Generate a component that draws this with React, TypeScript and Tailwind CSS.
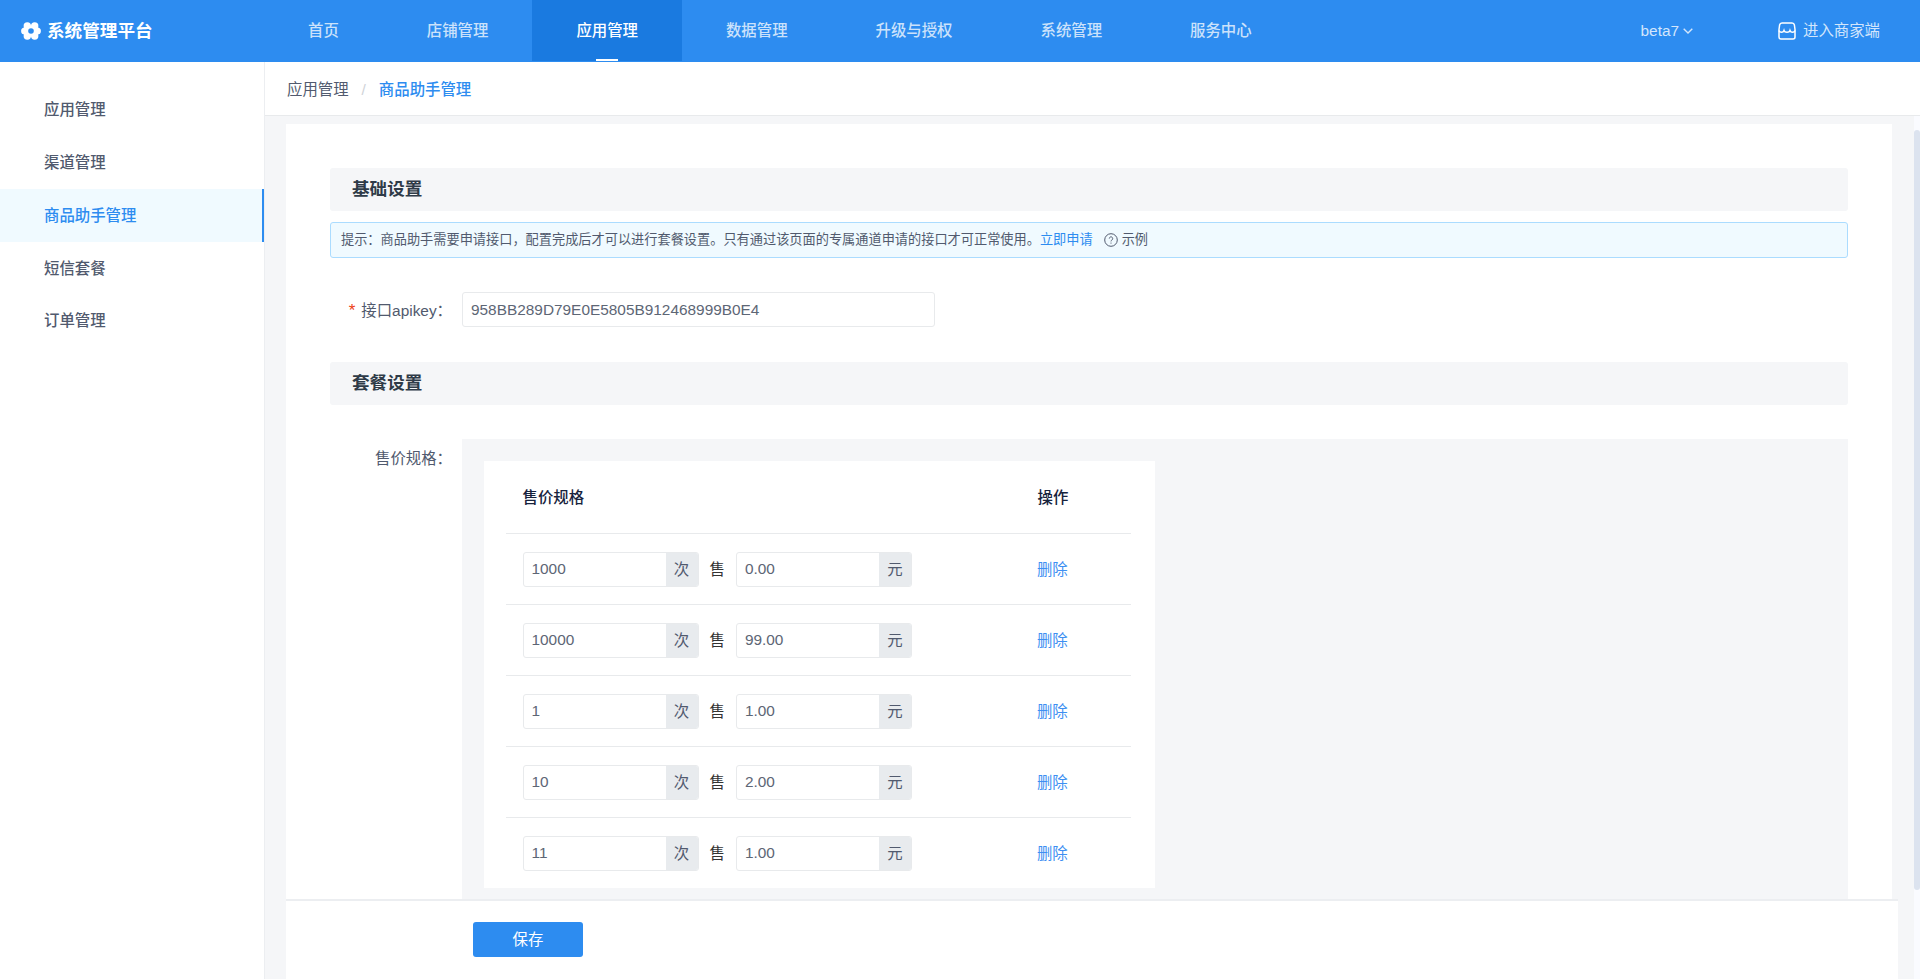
const NAV = ["首页", "店铺管理", "应用管理", "数据管理", "升级与授权", "系统管理", "服务中心"];
const SIDE = ["应用管理", "渠道管理", "商品助手管理", "短信套餐", "订单管理"];
const ROWS = [
  ["1000", "0.00"],
  ["10000", "99.00"],
  ["1", "1.00"],
  ["10", "2.00"],
  ["11", "1.00"],
];
const NOTICE = "提示\uFF1A商品助手需要申请接口\uFF0C配置完成后才可以进行套餐设置。只有通过该页面的专属通道申请的接口才可正常使用。";

const LogoIcon = () => (
  <svg viewBox="0 0 20 20" className="h-[20px] w-[20px]" fill="#fff">
    <circle cx="6.300" cy="5" r="3.700" />
    <circle cx="13.700" cy="5" r="3.700" />
    <circle cx="3.700" cy="10" r="3.600" />
    <circle cx="16.300" cy="10" r="3.600" />
    <circle cx="6.300" cy="15" r="3.700" />
    <circle cx="13.700" cy="15" r="3.700" />
    <circle cx="10" cy="10" r="5.500" />
    <circle cx="10" cy="10" r="2.800" fill="#2d8cf0" />
  </svg>
);

const StoreIcon = () => (
  <svg viewBox="0 0 18 18" className="h-[18px] w-[18px]" fill="none" stroke="#fff" strokeWidth="1.5">
    <path d="M4 1h10a2.500 2.500 0 0 1 2.400 2L17 7.500V15a2 2 0 0 1-2 2H3a2 2 0 0 1-2-2V7.500L1.600 3A2.500 2.500 0 0 1 4 1Z" />
    <path d="M1 8.500c.8 2.300 4.200 2.300 5 0 .7 2.300 5.300 2.300 6 0 .8 2.300 4.200 2.300 5 0" />
  </svg>
);

const Chevron = () => (
  <svg viewBox="0 0 10 6" className="h-[6px] w-[10px]" fill="none" stroke="#d3e6fc" strokeWidth="1.4">
    <path d="M.7.8 5 5 9.300.8" />
  </svg>
);

const HelpIcon = () => (
  <svg viewBox="0 0 14 14" className="h-[14px] w-[14px]" fill="none" stroke="#515a6e" strokeWidth="1">
    <circle cx="7" cy="7" r="6.300" />
    <path d="M5.300 5.500a1.700 1.700 0 1 1 2.600 1.500c-.6.4-.9.700-.9 1.400" />
    <path d="M7 9.600v1" />
  </svg>
);

const SectionTitle = ({ title }: { title: string }) => (
  <div className="flex h-[43px] items-center rounded-[3px] bg-[#f5f6f8] pl-[22px] text-[17.6px] font-bold text-[#2f3b48]">
    {title}
  </div>
);

const PriceInput = ({ value, unit }: { value: string; unit: string }) => (
  <div className="flex h-[35.2px] w-[176px] overflow-hidden rounded-[3px] border border-[#e8eaec]">
    <span className="flex-1 pl-[8px] text-[15.4px] leading-[31px] text-[#5d6675]">{value}</span>
    <span className="flex w-[32px] items-center justify-center bg-[#e8ebee] text-[15.4px] text-[#515a6e]">{unit}</span>
  </div>
);

export default function App() {
  return (
    <div className="flex h-[979px] flex-col overflow-hidden bg-white font-['Liberation_Sans','Noto_Sans_CJK_SC',sans-serif]">
      <header className="flex h-[62px] shrink-0 items-stretch bg-[#2d8cf0]">
        <div className="flex w-[264px] items-center gap-[6px] pl-[21px] text-[17.6px] font-bold text-white">
          <LogoIcon />
          系统管理平台
        </div>
        <nav className="flex flex-1 items-stretch">
          {NAV.map((item) =>
            item === "应用管理" ? (
              <a key={item} className="relative mb-px flex items-center bg-[#1a7ae0] px-[44px] text-[15.4px] font-medium text-white">
                {item}
                <span className="absolute bottom-0 left-1/2 h-[2px] w-[22px] -translate-x-1/2 bg-white" />
              </a>
            ) : (
              <a key={item} className="flex items-center px-[44px] text-[15.4px] font-medium text-[#cbe2fb]">
                {item}
              </a>
            ),
          )}
        </nav>
        <div className="flex items-center gap-[4px] text-[15.4px] text-[#d3e6fc]">
          beta7
          <Chevron />
        </div>
        <div className="ml-[85px] flex items-center gap-[7px] pr-[40px] text-[15.4px] text-[#d3e6fc]">
          <StoreIcon />
          进入商家端
        </div>
      </header>

      <div className="flex min-h-0 flex-1">
        <aside className="w-[265px] shrink-0 border-r border-[#eceef1] pt-[21.4px]">
          {SIDE.map((item) =>
            item === "商品助手管理" ? (
              <a key={item} className="flex h-[52.8px] items-center border-r-2 border-[#2d8cf0] bg-[#f0faff] pl-[44px] text-[15.4px] font-medium text-[#2d8cf0]">
                {item}
              </a>
            ) : (
              <a key={item} className="flex h-[52.8px] items-center pl-[44px] text-[15.4px] font-medium text-[#515a6e]">
                {item}
              </a>
            ),
          )}
        </aside>

        <main className="flex min-w-0 flex-1 flex-col">
          <div className="flex h-[54px] shrink-0 items-center border-b border-[#e8eaec] pt-[2px] pl-[22px] text-[15.4px]">
            <span className="text-[#515a6e]">应用管理</span>
            <span className="mx-[13px] text-[#d0d3d8]">/</span>
            <span className="font-medium text-[#2d8cf0]">商品助手管理</span>
          </div>

          <div className="relative flex min-h-0 flex-1 bg-[#f5f6f8]">
            <div className="min-w-0 flex-1 overflow-hidden pt-[8px] pr-[22px] pl-[21px]">
              <div className="bg-white px-[44px] pt-[44px]">
                <SectionTitle title="基础设置" />
                <div className="mt-[11px] flex h-[36px] items-center rounded-[3px] border border-[#abdcff] bg-[#f0faff] pl-[10px] text-[13.2px] text-[#515a6e]">
                  <span>{NOTICE}</span>
                  <a className="text-[#2d8cf0]">立即申请</a>
                  <span className="ml-[11px] flex items-center gap-[4px]">
                    <HelpIcon />
                    示例
                  </span>
                </div>

                <div className="mt-[34px] flex items-center">
                  <label className="flex w-[132px] items-center justify-end pt-[2px] pr-[10px] text-[15.4px] text-[#515a6e]">
                    <span className="mr-[6px] text-[17px] text-[#ed4014]">*</span>
                    {"接口apikey\uFF1A"}
                  </label>
                  <div className="h-[35.2px] w-[473px] rounded-[3px] border border-[#e8eaec] pl-[8px] text-[15.4px] leading-[33px] text-[#5d6675]">
                    958BB289D79E0E5805B912468999B0E4
                  </div>
                </div>

                <div className="mt-[35px]">
                  <SectionTitle title="套餐设置" />
                </div>

                <div className="mt-[34px] flex items-start">
                  <label className="w-[132px] pt-[8px] pr-[10px] text-right text-[15.4px] text-[#515a6e]">{"售价规格\uFF1A"}</label>
                  <div className="flex-1 bg-[#f5f6f8] px-[22px] pt-[22px] pb-[60px]">
                    <div className="w-[671px] bg-white pr-[24px] pl-[22px]">
                      <div className="flex h-[73px] items-center border-b border-[#e8eaec] pl-[16.500px] text-[15.4px] font-medium text-[#17233d]">
                        <span className="w-[515px]">售价规格</span>
                        <span>操作</span>
                      </div>
                      {ROWS.map(([times, price], i) => (
                        <div
                          key={i}
                          className={
                            i < ROWS.length - 1
                              ? "flex h-[71px] items-center border-b border-[#e8eaec] pl-[16.500px] text-[15.4px]"
                              : "flex h-[70px] items-center pl-[16.500px] text-[15.4px]"
                          }
                        >
                          <PriceInput value={times} unit="次" />
                          <span className="mx-[11px] text-[#333]">售</span>
                          <PriceInput value={price} unit="元" />
                          <a className="ml-[125px] text-[#3d8ff2]">删除</a>
                        </div>
                      ))}
                    </div>
                  </div>
                </div>
              </div>
            </div>

            <div className="w-[6px] shrink-0 bg-[#fafbff] pt-[14px]">
              <div className="h-[760px] rounded-[3px] bg-[#dce3ef]" />
            </div>

            <div className="absolute bottom-0 left-[21px] h-[80px] w-[1612px] border-t-2 border-[#eceef1] bg-white pt-[21px] pl-[187px]">
              <button className="h-[35.2px] w-[110px] rounded-[3px] bg-[#2d8cf0] text-[15.4px] text-white">保存</button>
            </div>
          </div>
        </main>
      </div>
    </div>
  );
}
